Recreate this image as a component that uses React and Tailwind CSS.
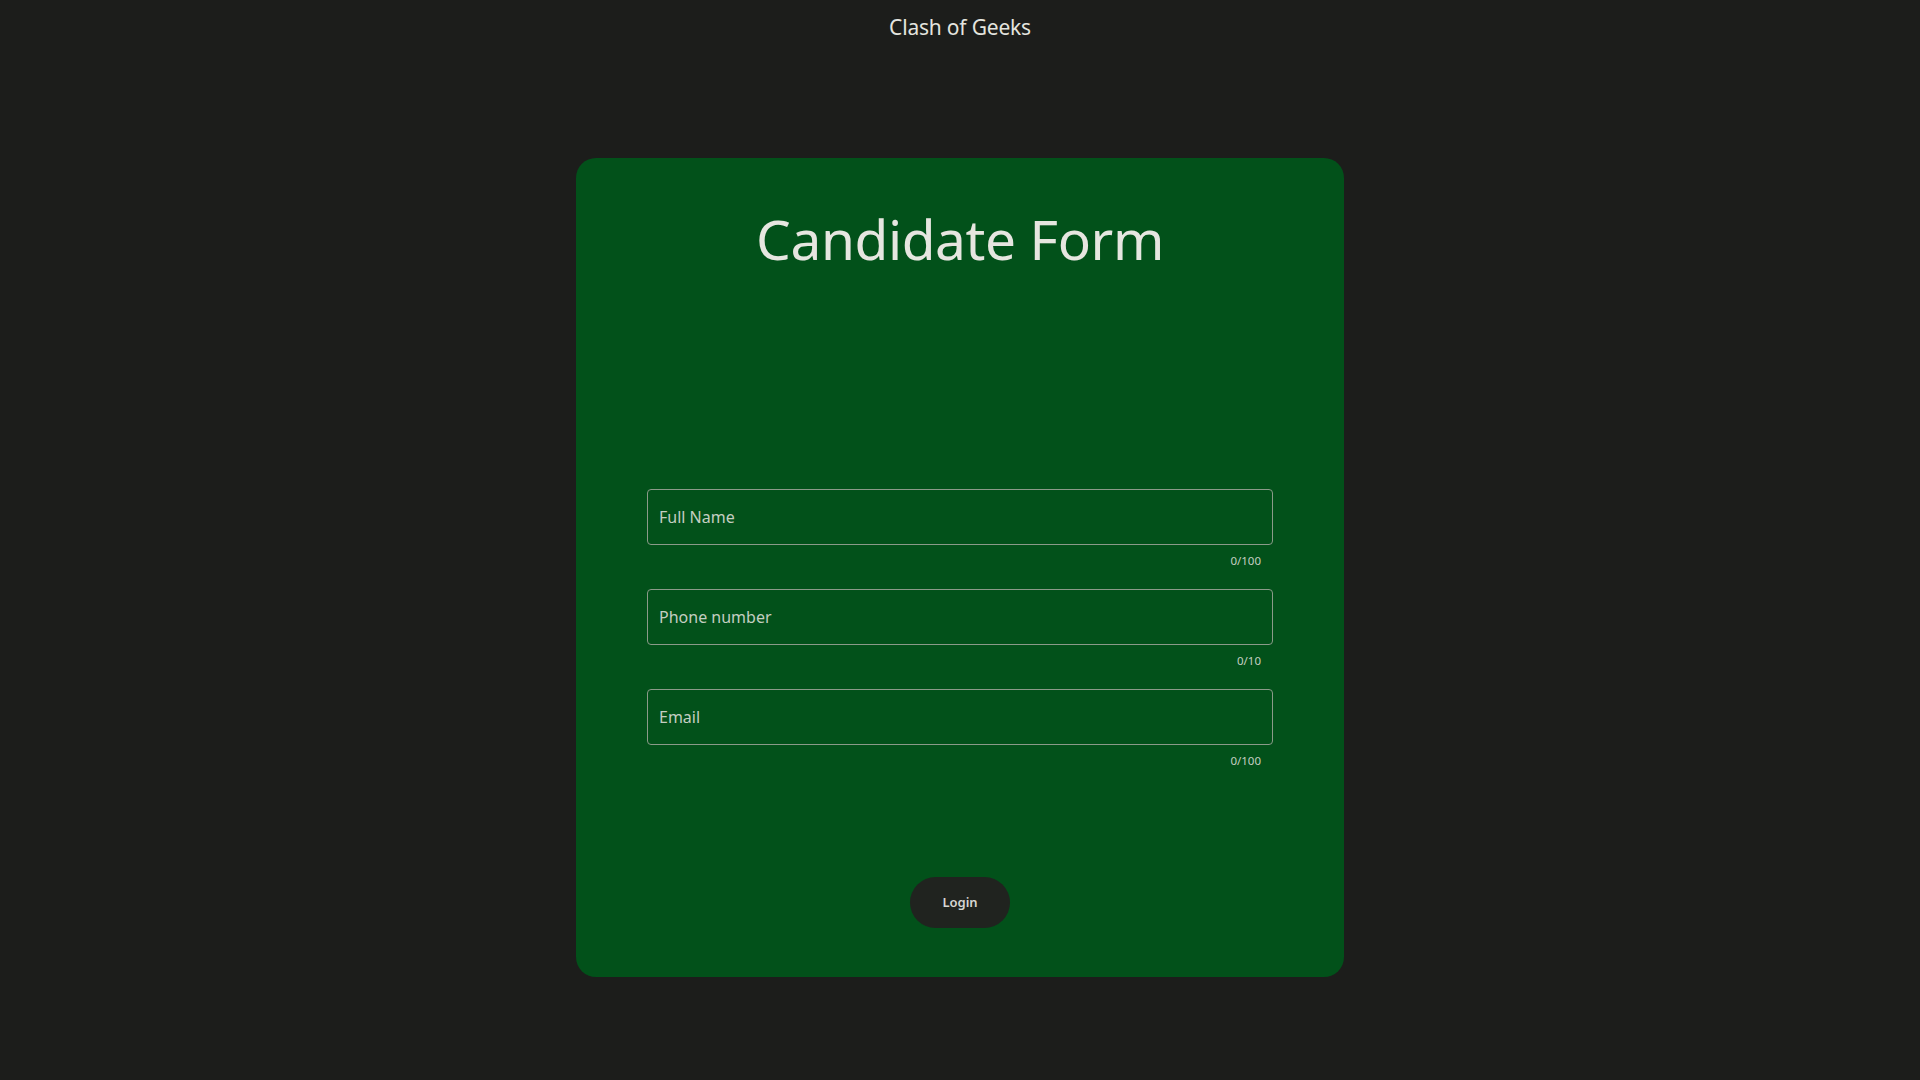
import React from 'react'

const fields = [
  { label: 'Full Name', max: 100 },
  { label: 'Phone number', max: 10 },
  { label: 'Email', max: 100 },
]

const App = () => {
  return (
    <div className="min-h-screen bg-[#1c1d1b] flex flex-col items-center font-['Noto_Sans','Open_Sans',sans-serif]">
      {/* Header */}
      <header className="h-[55px] flex items-center justify-center">
        <span className="text-[21px] text-[#e4e4df] tracking-[-0.2px]">Clash of Geeks</span>
      </header>

      {/* Card */}
      <div className="mt-[103px] w-[768px] h-[819px] rounded-[20px] bg-[#02511a] flex flex-col items-center pt-[48px] px-[71px]">
        <h1 className="text-[55px] leading-[66px] text-[#e6e6e0] tracking-[-0.4px]">Candidate Form</h1>

        <div className="mt-[217px] w-full flex flex-col gap-[9px]">
          {fields.map((f) => (
            <div key={f.label} className="flex flex-col">
              <input
                type="text"
                placeholder={f.label}
                maxLength={f.max}
                className="h-[56px] w-full rounded-[4px] border border-[#8b9a89] bg-transparent px-[11px] text-[16px] text-[#e6e6e0] placeholder:text-[#c4cec1] outline-none"
              />
              <div className="h-[35px] flex justify-end items-center pr-[12px] pb-[3px] text-[11.5px] text-[#c4cec1]">
                0/{f.max}
              </div>
            </div>
          ))}
        </div>

        <button className="mt-[97px] w-[100px] h-[51px] rounded-full bg-[#20231f] text-[13px] font-semibold text-[#d6d6d2]">
          Login
        </button>
      </div>
    </div>
  )
}

export default App
